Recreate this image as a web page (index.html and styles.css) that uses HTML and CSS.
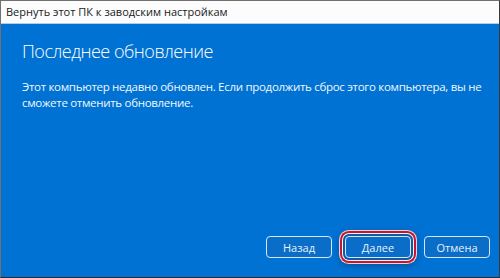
FILE: index.html
```html
<!DOCTYPE html>
<html lang="ru">
<head>
    <meta charset="UTF-8">
    <title>Вернуть этот ПК к заводским настройкам</title>
    <link rel="stylesheet" href="styles.css">
</head>
<body>
    <div id="win">
        <div class="titlebar">Вернуть этот ПК к заводским настройкам</div>
        <div class="content">
            <h1 class="head">Последнее обновление</h1>
            <p class="text">Этот компьютер недавно обновлен. Если продолжить сброс этого компьютера, вы не сможете отменить обновление.</p>
            <div class="buttons">
                <button class="btn">Назад</button>
                <button class="btn focus">Далее</button>
                <button class="btn">Отмена</button>
            </div>
        </div>
    </div>
</body>
</html>
```

FILE: styles.css
```css
html,body{
    margin: 0;
    padding: 0;
}
body{
    width: 500px;
    height: 278px;
    font-family: "Open Sans", "Noto Sans", sans-serif;
    background: #0072d3;
}
#win{
    box-sizing: border-box;
    width: 500px;
    height: 278px;
    border: 1px solid #707070;
    border-bottom-color: #2a2a2a;
    border-right-color: #3a3a3a;
    display: flex;
    flex-direction: column;
}
.titlebar{
    height: 22px;
    background: #fcfcfc;
    border-bottom: 1px solid #a8d0f0;
    font-size: 11px;
    line-height: 22px;
    padding-left: 5px;
    color: #1a1a1a;
}
.content{
    flex: 1;
    background: #0072d3;
    padding: 0 12px 0 21px;
    display: flex;
    flex-direction: column;
    color: #fff;
}
.head{
    font-weight: 300;
    font-size: 18px;
    letter-spacing: -0.5px;
    margin: 14px 0 0;
    line-height: 26px;
}
.text{
    font-size: 11.5px;
    letter-spacing: -0.3px;
    line-height: 16px;
    margin: 15px 0 0;
    color: #f2f7fc;
}
.buttons{
    margin-top: auto;
    margin-right: -3px;
    margin-bottom: 19px;
    display: flex;
    justify-content: flex-end;
    gap: 13px;
}
.btn{
    width: 66px;
    height: 22px;
    box-sizing: border-box;
    background: #0a6ec8;
    border: 1px solid #d4e7f8;
    border-radius: 4px;
    color: #e6f1fb;
    font-family: "Open Sans", "Noto Sans", sans-serif;
    font-size: 11px;
    padding: 0;
}
.focus{
    box-shadow: 0 0 0 2px #0d5ba8, 0 0 0 3px #f4f4f4, 0 0 0 5px #c8142f, 0 0 0 6px #f0d0d4, 0 2px 6px 6px rgba(0,0,0,0.25);
}
```
